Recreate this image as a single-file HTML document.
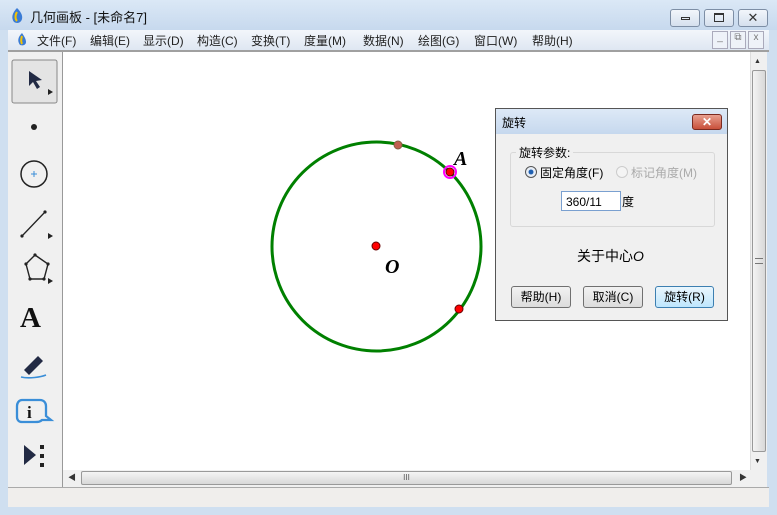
<!DOCTYPE html>
<html><head><meta charset="utf-8"><style>
*{margin:0;padding:0;box-sizing:border-box}
body{width:777px;height:515px;overflow:hidden;background:#cfdff0;font-family:"Liberation Sans","Noto Sans CJK SC",sans-serif;font-size:12px;position:relative}
.abs{position:absolute}
.tb{left:0;top:0;width:777px;height:30px;background:linear-gradient(#dbe8f6,#c7d9ee)}
.wbtn{top:9px;height:18px;border:1px solid #7d8ea5;border-radius:3px;background:linear-gradient(#f2f6fb,#d5e0ee)}
.menu{left:8px;top:30px;width:761px;height:20px;background:linear-gradient(#f3f6fb,#dfe7f2);color:#222;font-size:12px}
.menu span{position:absolute;top:2px}
.cv{left:63px;top:52px;width:687px;height:418px;background:#fff}
.tool{left:8px;top:52px;width:55px;height:435px;background:#f0f0f0;border-right:1px solid #999}
.dlg{left:495px;top:108px;width:233px;height:213px;border:1px solid #555;background:#f0f0f0}
.btn{top:177px;height:22px;border:1px solid #707070;border-radius:3px;background:linear-gradient(#f2f2f2,#dcdcdc);text-align:center;line-height:20px;font-size:12px}
</style></head><body>
<div class="abs tb"></div>
<svg class="abs" style="left:9px;top:7px" width="16" height="18"><path d="M8 1C3 6 2 11 5 15c3 2 7 1 8-3 1-4-2-8-5-11z" fill="#3a7bd5"/><path d="M8 5c-2 3-2 7 0 9" stroke="#f6c400" stroke-width="2" fill="none"/></svg>
<div class="abs" style="left:30px;top:7px;font-size:13px;color:#111">几何画板 - [未命名7]</div>
<div class="abs wbtn" style="left:670px;width:30px"><div style="margin:7px auto 0;width:9px;height:3px;border:1px solid #333"></div></div>
<div class="abs wbtn" style="left:704px;width:30px"><div style="margin:3px auto 0;width:10px;height:9px;border:1px solid #333;border-top-width:2px"></div></div>
<div class="abs wbtn" style="left:738px;width:30px;text-align:center;font-size:13px;line-height:16px;color:#333">✕</div>
<div class="abs menu">
<svg style="position:absolute;left:8px;top:2px" width="12" height="16"><path d="M6 1C2 5 1 9 4 13c3 1 6 0 6-3 0-3-2-6-4-9z" fill="#3a7bd5"/><path d="M6 4c-1 3-1 6 0 8" stroke="#f6c400" stroke-width="2" fill="none"/></svg>
<span style="left:29px">文件(F)</span><span style="left:82px">编辑(E)</span><span style="left:135px">显示(D)</span><span style="left:189px">构造(C)</span><span style="left:243px">变换(T)</span><span style="left:296px">度量(M)</span><span style="left:355px">数据(N)</span><span style="left:410px">绘图(G)</span><span style="left:466px">窗口(W)</span><span style="left:524px">帮助(H)</span>
<div style="position:absolute;left:704px;top:1px;width:16px;height:18px;border:1px solid #aab;background:#eef2f8;font-size:10px;text-align:center;color:#777">_</div>
<div style="position:absolute;left:722px;top:1px;width:16px;height:18px;border:1px solid #aab;background:#eef2f8;font-size:10px;text-align:center;color:#777">⧉</div>
<div style="position:absolute;left:740px;top:1px;width:16px;height:18px;border:1px solid #aab;background:#eef2f8;font-size:10px;text-align:center;color:#777">x</div>
</div>
<div class="abs" style="left:8px;top:50px;width:761px;height:2px;background:#a0a0a0"></div>
<div class="abs tool"></div>
<svg class="abs" style="left:8px;top:52px" width="55" height="435">
<rect x="4" y="8" width="45" height="43" rx="2" fill="#e4e4e4" stroke="#888"/>
<path d="M21 19l0 15 4-4 4 7 3-2-4-6 6-1z" fill="#222a44"/><path d="M40 37l5 3-5 3z" fill="#222"/>
<circle cx="26" cy="75" r="3" fill="#222"/>
<circle cx="26" cy="122" r="13" fill="none" stroke="#222" stroke-width="1.5"/><path d="M23 122h6M26 119v6" stroke="#3a8ed8"/>
<path d="M14 184l23-24" stroke="#222" stroke-width="1.3"/><circle cx="14" cy="184" r="1.6" fill="#222"/><circle cx="37" cy="160" r="1.6" fill="#222"/><path d="M40 181l5 3-5 3z" fill="#222"/>
<path d="M27 203l13 9-4 15h-14l-4-15z" fill="none" stroke="#222" stroke-width="1.4"/><circle cx="27" cy="203" r="1.6" fill="#222"/><circle cx="40" cy="212" r="1.6" fill="#222"/><circle cx="36" cy="227" r="1.6" fill="#222"/><circle cx="22" cy="227" r="1.6" fill="#222"/><circle cx="18" cy="212" r="1.6" fill="#222"/><path d="M40 226l5 3-5 3z" fill="#222"/>
<text x="12" y="275" font-family="Liberation Serif" font-weight="bold" font-size="29" fill="#111">A</text>
<path d="M16 318l14-14 5 5-14 14z" fill="#222a44"/><path d="M13 325c8 2 20 0 25-2" stroke="#3a8ed8" stroke-width="1.6" fill="none"/>
<path d="M14 348h18c4 0 6 3 6 6v10l5 4h-9c-2 2-4 2-7 2h-13c-3 0-5-2-5-5v-11c0-3 2-6 5-6z" fill="none" stroke="#3a8ed8" stroke-width="2.3"/>
<text x="19" y="366" font-family="Liberation Serif" font-weight="bold" font-size="17" fill="#111">i</text>
<path d="M16 393l12 10-12 10z" fill="#222a44"/><rect x="32" y="393" width="4" height="4" fill="#222"/><rect x="32" y="402" width="4" height="4" fill="#222"/><rect x="32" y="411" width="4" height="4" fill="#222"/>
</svg>
<div class="abs cv"></div>
<svg class="abs" style="left:0;top:0" width="777" height="515">
<circle cx="376.5" cy="246.5" r="104.5" fill="none" stroke="#008000" stroke-width="3"/>
<circle cx="398" cy="145" r="4" fill="#c06050" stroke="#806040"/>
<circle cx="450" cy="172" r="6" fill="none" stroke="#ff00ff" stroke-width="2"/>
<circle cx="450" cy="172" r="4" fill="#ff0000" stroke="#600"/>
<circle cx="459" cy="309" r="4" fill="#ff0000" stroke="#600"/>
<circle cx="376" cy="246" r="4" fill="#ff0000" stroke="#600"/>
<text x="454" y="165" font-family="Liberation Serif" font-style="italic" font-weight="bold" font-size="20">A</text>
<text x="385" y="273" font-family="Liberation Serif" font-style="italic" font-weight="bold" font-size="20">O</text>
</svg>
<div class="abs" style="left:750px;top:52px;width:17px;height:418px;background:#f0f0f0;border-left:1px solid #ddd"></div>
<div class="abs" style="left:752px;top:70px;width:14px;height:382px;border:1px solid #999;border-radius:2px;background:linear-gradient(90deg,#f4f4f4,#d8d8d8)"></div>
<div class="abs" style="left:755px;top:258px;width:8px;height:6px;border-top:1px solid #777;border-bottom:1px solid #777"></div>
<div class="abs" style="left:754px;top:58px;font-size:7px;color:#333">▲</div>
<div class="abs" style="left:754px;top:458px;font-size:7px;color:#333">▼</div>
<div class="abs" style="left:63px;top:470px;width:704px;height:17px;background:#f0f0f0"></div>
<div class="abs" style="left:81px;top:471px;width:651px;height:14px;border:1px solid #999;border-radius:2px;background:linear-gradient(#f4f4f4,#d8d8d8);text-align:center;font-size:8px;line-height:12px;color:#555">III</div>
<div class="abs" style="left:68px;top:472px;font-size:8px;color:#333">◀</div>
<div class="abs" style="left:739px;top:472px;font-size:8px;color:#333">▶</div>
<div class="abs" style="left:8px;top:487px;width:761px;height:20px;background:#f0eeec;border-top:1px solid #aaa"></div>
<div class="abs dlg">
<div style="height:25px;background:linear-gradient(#dde9f7,#c6d8ee);padding:5px 0 0 6px;font-size:12px">旋转</div>
<div style="position:absolute;left:196px;top:5px;width:30px;height:16px;border:1px solid #7a2a20;border-radius:3px;background:linear-gradient(#e8a090,#c8503a);color:#fff;text-align:center;font-size:12px;line-height:14px;font-weight:bold">✕</div>
<div style="position:absolute;left:14px;top:43px;width:205px;height:75px;border:1px solid #d8d8d8;border-radius:3px"></div>
<div style="position:absolute;left:20px;top:35px;background:#f0f0f0;padding:0 3px">旋转参数:</div>
<div style="position:absolute;left:29px;top:57px;width:12px;height:12px;border-radius:50%;border:1px solid #555;background:radial-gradient(#1f5fb0 30%,#e8eef6 40%)"></div>
<div style="position:absolute;left:44px;top:55px">固定角度(F)</div>
<div style="position:absolute;left:120px;top:57px;width:12px;height:12px;border-radius:50%;border:1px solid #ccc;background:#f4f4f4"></div>
<div style="position:absolute;left:135px;top:55px;color:#aaa">标记角度(M)</div>
<div style="position:absolute;left:65px;top:82px;width:60px;height:20px;border:1px solid #7aa0d0;background:#fff;padding:3px 0 0 4px">360/11</div>
<div style="position:absolute;left:126px;top:84px">度</div>
<div style="position:absolute;left:81px;top:137px;font-size:14px">关于中心<i style="font-family:'Liberation Sans'">O</i></div>
<div class="btn abs" style="left:15px;width:60px">帮助(H)</div>
<div class="btn abs" style="left:87px;width:60px">取消(C)</div>
<div class="btn abs" style="left:159px;width:59px;border-color:#3c7fb1;background:linear-gradient(#eaf6fd,#bee6fd)">旋转(R)</div>
</div>
</body></html>
